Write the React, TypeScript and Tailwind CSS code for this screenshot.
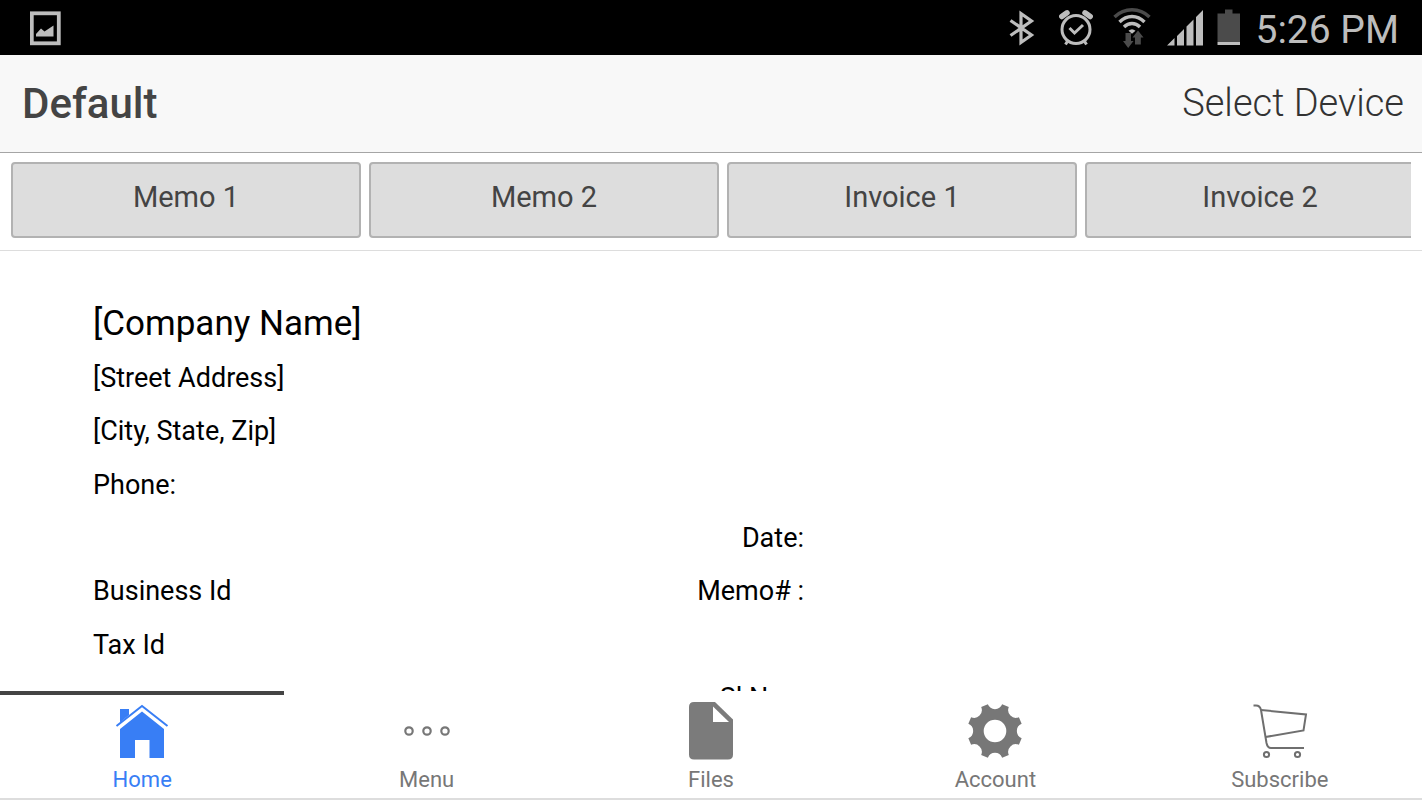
import type { ReactNode } from "react";

function PictureIcon() {
  return (
    <svg width="32" height="36" viewBox="0 0 32 36" aria-hidden="true">
      <rect x="1.800" y="3.300" width="27" height="30" fill="none" stroke="#bdbdbd" strokeWidth="3.800" />
      <path d="M6 24 L11 18.500 L14.500 21.500 L23.500 15.500 V26.500 H6 Z" fill="#bdbdbd" />
    </svg>
  );
}

function BluetoothIcon() {
  return (
    <svg width="26" height="38" viewBox="0 0 26 38" fill="none" stroke="#bdbdbd" strokeWidth="3.200" aria-hidden="true">
      <path d="M1.500 11.500 L22.500 26 L12 33.500 V4.500 L22.500 12 L1.500 26.500" />
    </svg>
  );
}

function AlarmIcon() {
  return (
    <svg width="34" height="38" viewBox="0 0 34 38" fill="none" stroke="#bdbdbd" strokeWidth="3" aria-hidden="true">
      <circle cx="17" cy="20.500" r="14" />
      <path d="M10.500 19 L15.500 24 L24 16" />
      <path d="M2.800 7.500 L8 3.800 M31.200 7.500 L26 3.800" strokeWidth="5.500" strokeLinecap="round" />
      <path d="M9 31.500 L6.500 35.500 M25 31.500 L27.500 35.500" />
    </svg>
  );
}

function WifiIcon() {
  return (
    <svg width="38" height="42" viewBox="0 0 38 42" fill="none" strokeWidth="3.400" aria-hidden="true">
      <path d="M1.500 10 Q9 2.800 19 2.800 T36.500 10" stroke="#4b4b4b" />
      <path d="M6.500 15 Q12 9.500 19 9.500 T31.500 15" stroke="#bdbdbd" />
      <path d="M11 20 Q14.500 16.500 19 16.500 T27 20" stroke="#bdbdbd" />
      <path d="M15.500 23.800 Q19 20.500 22.500 23.800 L19 26.800 Z" fill="#bdbdbd" />
      <path d="M12.500 26 H18 V34 H20.500 L15.200 41 L10 34 H12.500 Z" fill="#4b4b4b" />
      <path d="M22 37.500 H27.800 V30.500 H30.500 L25 23.500 L19.500 30.500 H22 Z" fill="#4b4b4b" />
    </svg>
  );
}

function SignalIcon() {
  return (
    <svg width="38" height="38" viewBox="0 0 38 38" fill="#bdbdbd" aria-hidden="true">
      <path d="M0 36.500 L7.500 29 V36.500 Z M10 27 L17 20 V36.500 H10 Z M19.500 17.500 L26.500 10.500 V36.500 H19.500 Z M29 8 L36 1 V36.500 H29 Z" />
    </svg>
  );
}

function BatteryIcon() {
  return (
    <svg width="24" height="38" viewBox="0 0 24 38" aria-hidden="true">
      <path d="M8 0.500 H15.500 V4.500 H23 V33 H0.500 V4.500 H8 Z" fill="#4b4b4b" />
      <path d="M0.500 33 H23 V36 H0.500 Z" fill="#bdbdbd" />
    </svg>
  );
}

function HomeIcon() {
  return (
    <svg width="56" height="56" viewBox="0 0 56 56" fill="#387ef5" aria-hidden="true">
      <path d="M6 6 H15 V12 L6 19.500 Z" />
      <path d="M2.500 23 L28 3 L53.500 23" fill="none" stroke="#387ef5" strokeWidth="2" />
      <path d="M6 26 L28 8.500 L50 26 V55 H35.500 V37 H21 V55 H6 Z" />
    </svg>
  );
}

function MoreIcon() {
  return (
    <svg width="56" height="56" viewBox="0 0 56 56" fill="none" stroke="#777777" strokeWidth="2.200" aria-hidden="true">
      <circle cx="10" cy="28" r="3.700" />
      <circle cx="28" cy="28" r="3.700" />
      <circle cx="46" cy="28" r="3.700" />
    </svg>
  );
}

function FileIcon() {
  return (
    <svg width="56" height="58" viewBox="0 0 56 58" aria-hidden="true">
      <path d="M11 0 H32 L50 17.500 V52.500 Q50 57.500 45 57.500 H11 Q6 57.500 6 52.500 V5 Q6 0 11 0 Z" fill="#7b7b7b" />
      <path d="M30 4.500 V20 H46 Z" fill="#ffffff" />
    </svg>
  );
}

// Eight scalloped notches cut from a disc leave the teeth between them.
function gearOutline(): string {
  const point = (deg: number) => {
    const a = (deg * Math.PI) / 180;
    return `${(28 + 27.6 * Math.sin(a)).toFixed(2)} ${(28 - 27.6 * Math.cos(a)).toFixed(2)}`;
  };
  let d = `M${point(-15)}`;
  for (let i = 0; i < 8; i++) {
    d += ` A7.7 7.7 0 0 0 ${point(i * 45 + 15)} L${point(i * 45 + 30)}`;
  }
  return `${d} Z M28 16.7 A11.3 11.3 0 1 0 28 39.3 A11.3 11.3 0 1 0 28 16.7 Z`;
}

function GearIcon() {
  return (
    <svg width="56" height="56" viewBox="0 0 56 56" aria-hidden="true">
      <path d={gearOutline()} fill="#777777" fillRule="evenodd" />
    </svg>
  );
}

function CartIcon() {
  return (
    <svg width="56" height="56" viewBox="0 0 56 56" fill="none" stroke="#6f6f6f" strokeWidth="2" aria-hidden="true">
      <path d="M1.500 2.500 H4 Q8 2.500 9 7 L14.500 40 Q15.500 45 19 45 H52" />
      <path d="M9 7 L54 11.500 L51.500 27.500 L13.500 34" />
      <circle cx="14.500" cy="51.500" r="2.600" />
      <circle cx="45.500" cy="51.500" r="2.600" />
    </svg>
  );
}

const templates = ["Memo 1", "Memo 2", "Invoice 1", "Invoice 2"];

const rows = [
  { left: "[Street Address]", right: "" },
  { left: "[City, State, Zip]", right: "" },
  { left: "Phone:", right: "" },
  { left: "", right: "Date:" },
  { left: "Business Id", right: "Memo# :" },
  { left: "Tax Id", right: "" },
  { left: "", right: "Sl No. :" },
];

const tabs: { label: string; icon: ReactNode; active?: boolean }[] = [
  { label: "Home", icon: <HomeIcon />, active: true },
  { label: "Menu", icon: <MoreIcon /> },
  { label: "Files", icon: <FileIcon /> },
  { label: "Account", icon: <GearIcon /> },
  { label: "Subscribe", icon: <CartIcon /> },
];

export default function App() {
  return (
    <div className="flex h-screen flex-col overflow-hidden bg-white font-['Roboto',sans-serif] text-black">
      <div className="flex h-[55px] shrink-0 items-center justify-between bg-black pr-[23px] pl-[30px]">
        <PictureIcon />
        <div className="flex items-center">
          <div className="flex items-center gap-6">
            <BluetoothIcon />
            <AlarmIcon />
          </div>
          <div className="flex items-center gap-4 pl-5">
            <WifiIcon />
            <SignalIcon />
          </div>
          <div className="flex items-center gap-[14px] pl-3">
            <BatteryIcon />
            <time className="pt-1 text-[39px] leading-[50px] text-[#bdbdbd]">5:26 PM</time>
          </div>
        </div>
      </div>

      <header className="flex h-[98px] shrink-0 items-center justify-between border-b border-[#a5a5a5] bg-[#f8f8f8] pr-[18px] pl-[22px]">
        <h1 className="text-[42px] leading-[48px] font-medium text-[#444444]">Default</h1>
        <button type="button" className="pb-0.5 text-[38px] leading-[48px] font-light text-[#333333]">
          Select Device
        </button>
      </header>

      <div className="shrink-0 border-b border-[#dddddd] px-[11px] pt-[9px] pb-3">
        <div className="flex gap-2 overflow-hidden">
          {templates.map((name) => (
            <button
              key={name}
              type="button"
              className="h-[76px] w-[350px] shrink-0 rounded-[4px] border-2 border-[#b2b2b2] bg-[#dddddd] pb-1.5 text-[29px] leading-[36px] text-[#444444]"
            >
              {name}
            </button>
          ))}
        </div>
      </div>

      <main className="min-h-0 flex-1 overflow-hidden px-[93px] pt-[46px]">
        <h2 className="text-[35px] leading-[54px]">[Company Name]</h2>
        <div className="grid h-[374px] auto-rows-fr">
          {rows.map((row, i) => (
            <div key={i} className="grid grid-cols-[711px_1fr] items-center text-[27px] leading-[32px]">
              <div className="col-start-1 row-start-1">{row.left}</div>
              <div className="col-start-1 row-start-1 text-right">{row.right}</div>
            </div>
          ))}
        </div>
      </main>

      <nav className="grid h-[109px] shrink-0 grid-cols-5 border-b-2 border-[#dddddd] bg-white">
        {tabs.map((tab) => (
          <button
            key={tab.label}
            type="button"
            className={
              tab.active
                ? "flex flex-col items-center border-t-4 border-[#444444] pt-[7px] text-[#387ef5]"
                : "flex flex-col items-center border-t-4 border-transparent pt-[7px] text-[#777777]"
            }
          >
            <span className="flex h-[58px] items-center">{tab.icon}</span>
            <span className="pt-1.5 text-[22px] leading-[28px]">{tab.label}</span>
          </button>
        ))}
      </nav>
    </div>
  );
}
